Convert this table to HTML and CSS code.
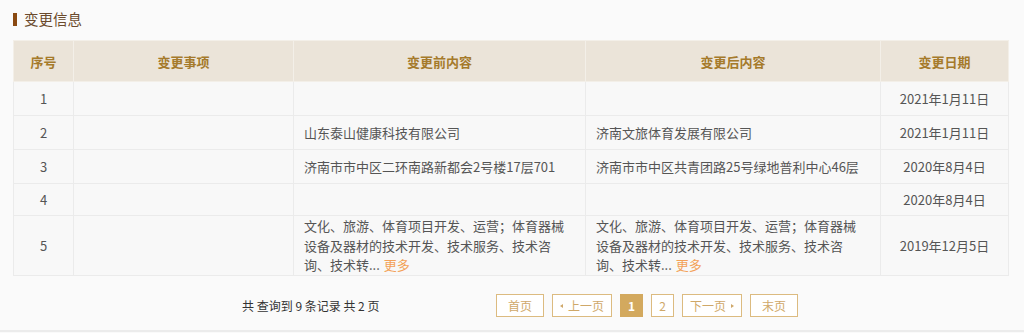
FILE: index.html
```html
<!DOCTYPE html>
<html lang="zh-CN">
<head>
<meta charset="utf-8">
<link rel="stylesheet" href="styles.css">
</head>
<body>
<div class="page">
  <div class="title"><span class="bar"></span><span class="title-text">变更信息</span></div>
  <table class="tbl">
    <colgroup>
      <col class="c1"><col class="c2"><col class="c3"><col class="c4"><col class="c5">
    </colgroup>
    <thead>
      <tr><th>序号</th><th>变更事项</th><th>变更前内容</th><th>变更后内容</th><th>变更日期</th></tr>
    </thead>
    <tbody>
      <tr><td class="ctr">1</td><td></td><td></td><td></td><td class="ctr">2021年1月11日</td></tr>
      <tr><td class="ctr">2</td><td></td><td>山东泰山健康科技有限公司</td><td class="wide">济南文旅体育发展有限公司</td><td class="ctr">2021年1月11日</td></tr>
      <tr><td class="ctr">3</td><td></td><td>济南市市中区二环南路新都会2号楼17层701</td><td class="wide">济南市市中区共青团路25号绿地普利中心46层</td><td class="ctr">2020年8月4日</td></tr>
      <tr class="short"><td class="ctr">4</td><td></td><td></td><td></td><td class="ctr">2020年8月4日</td></tr>
      <tr class="tall"><td class="ctr">5</td><td></td><td>文化、旅游、体育项目开发、运营；体育器械设备及器材的技术开发、技术服务、技术咨询、技术转...<span class="more">更多</span></td><td class="wide">文化、旅游、体育项目开发、运营；体育器械设备及器材的技术开发、技术服务、技术咨询、技术转...<span class="more">更多</span></td><td class="ctr">2019年12月5日</td></tr>
    </tbody>
  </table>
  <div class="pager">
    <span class="summary">共 查询到 9 条记录 共 2 页</span>
    <div class="btns">
      <a class="btn">首页</a>
      <a class="btn arrow"><span class="tri-l"></span>上一页</a>
      <a class="btn num active">1</a>
      <a class="btn num">2</a>
      <a class="btn arrow">下一页<span class="tri-r"></span></a>
      <a class="btn">末页</a>
    </div>
  </div>
</div>
<div class="bottom-line"></div>
</body>
</html>
```
FILE: styles.css
```css
html, body {
  margin: 0;
  padding: 0;
  background: #fafafa;
  font-family: "Noto Sans CJK SC", "Noto Sans", sans-serif;
}
.page {
  padding: 11px 16px 0 13px;
  height: 320px;
  box-sizing: border-box;
}
.title {
  display: flex;
  align-items: center;
  height: 16px;
}
.bar {
  width: 4px;
  height: 13px;
  background: #8a4a12;
  margin-right: 7px;
}
.title-text {
  font-size: 14.5px;
  color: #6b4a2c;
  line-height: 16px;
}
.tbl {
  margin-top: 13px;
  width: 995px;
  border-collapse: collapse;
  table-layout: fixed;
  font-size: 13px;
  color: #555;
  background: #f8f8f8;
}
.c1 { width: 60px; }
.c2 { width: 220px; }
.c3 { width: 292px; }
.c4 { width: 295px; }
.c5 { width: 128px; }
.tbl th {
  height: 41px;
  background: #ebe4d9;
  color: #a57a2b;
  font-weight: bold;
  font-size: 13px;
  border: 1px solid #f3efe8;
  padding: 0;
  box-sizing: border-box;
}
.tbl td {
  height: 34px;
  box-sizing: border-box;
  border: 1px solid #ebebeb;
  padding: 0 10px;
  line-height: 20px;
  vertical-align: middle;
}
.tbl td.wide {
  padding-right: 20px;
}
.tbl tr.short td {
  height: 32px;
}
.tbl tr.tall td {
  height: 60px;
  line-height: 19.5px;
}
.tbl td.ctr {
  text-align: center;
}
.more {
  color: #f3a258;
  margin-left: 4px;
}
.pager {
  display: flex;
  align-items: center;
  padding-left: 229px;
  margin-top: 18px;
}
.summary {
  font-size: 12px;
  color: #333;
  width: 254px;
}
.btns {
  display: flex;
  gap: 8px;
}
.btn {
  display: flex;
  align-items: center;
  justify-content: center;
  height: 21px;
  padding: 0 11px;
  border: 1px solid #dcbb80;
  color: #cfa869;
  font-size: 12px;
  background: #fff;
}
.btn.arrow {
  padding: 0 7px;
}
.btn.num {
  padding: 0;
  width: 21px;
}
.btn.active {
  background: #d3a95e;
  border-color: #d3a95e;
  color: #fff;
  font-weight: bold;
}
.tri-l, .tri-r {
  width: 0;
  height: 0;
  border-top: 2.5px solid transparent;
  border-bottom: 2.5px solid transparent;
}
.tri-l {
  border-right: 3px solid #cfa869;
  margin-right: 5px;
}
.tri-r {
  border-left: 3px solid #cfa869;
  margin-left: 5px;
}
.bottom-line {
  height: 2px;
  background: #ececec;
  margin-top: 10px;
}
```
